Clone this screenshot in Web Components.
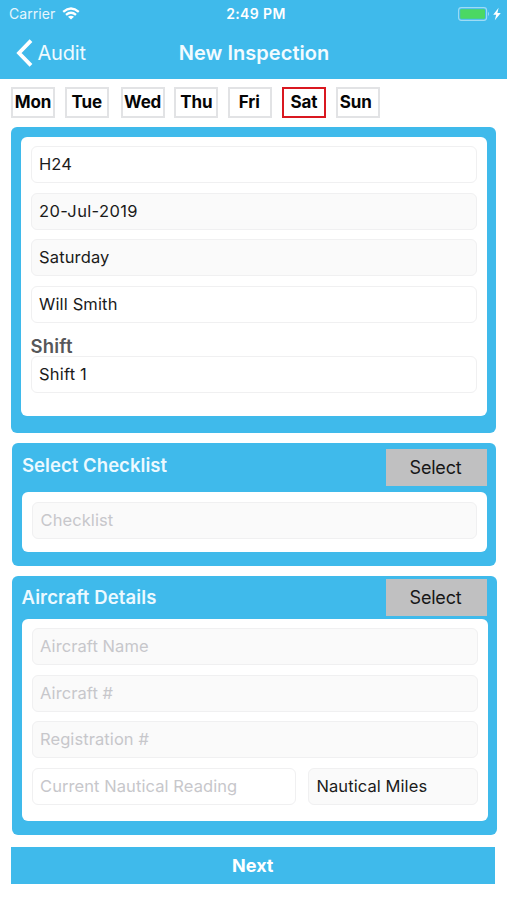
<!DOCTYPE html>
<html lang="en">
<head>
<meta charset="utf-8">
<title>New Inspection</title>
<style>
  body { margin: 0; width: 507px; height: 900px; background: #fff; color: #1b1b1b; overflow: hidden;
    font-family: Inter, "Liberation Sans", sans-serif; --blue: #3fbaeb; }
</style>
</head>
<body>
<inspection-app></inspection-app>
<script>
const define = (name, html, setup) => customElements.define(name, class extends HTMLElement {
  connectedCallback() {
    if (this.shadowRoot) return;
    const t = document.createElement('template');
    t.innerHTML = html;
    this.attachShadow({ mode: 'open' }).append(t.content.cloneNode(true));
    if (setup) setup(this);
  }
});

define('status-bar', `
<style>
  :host { display: grid; grid-template-columns: 1fr auto 1fr; align-items: center; height: 27px; padding: 0 5px 0 9px; color: #fff; }
  .left, .right { display: flex; align-items: center; }
  .left { gap: 6.5px; font-size: 14px; letter-spacing: .05px; color: #e6f6fd; }
  .time { font-size: 14px; font-weight: 600; letter-spacing: .4px; margin-left: 1px; }
  .right { justify-content: flex-end; }
  svg { display: block; }
</style>
<div class="left"><span>Carrier</span>
  <svg width="18" height="13" viewBox="0 0 18 13" fill="none" stroke="#fff" stroke-width="2.3">
    <path d="M1.2 4.9 Q9 -1.8 16.8 4.9"/><path d="M4 7.9 Q9 3.7 14 7.9"/><path d="M9 12.5 L6 9.7 Q9 7.6 12 9.7Z" fill="#fff" stroke="none"/>
  </svg></div>
<div class="time">2:49 PM</div>
<div class="right">
  <svg width="44" height="14" viewBox="0 0 44 14">
    <rect x=".6" y=".6" width="28" height="12.8" rx="2.8" fill="none" stroke="#9edcf5" stroke-width="1.1"/>
    <rect x="2.2" y="2.2" width="24.8" height="9.6" rx="1" fill="#4bd863"/>
    <path d="M30 4.8 Q32 7 30 9.2Z" fill="#9edcf5"/>
    <path d="M40.6 .8 L35.2 7.7 H38.2 L36.8 13.2 L42.8 6.1 H39.4Z" fill="#fff"/>
  </svg></div>`);

define('nav-bar', `
<style>
  :host { display: grid; grid-template-columns: 1fr auto 1fr; align-items: center; height: 51px; padding: 0 16px; color: #fff; }
  .back { display: flex; align-items: center; gap: 4.5px; font-size: 20px; letter-spacing: -.2px; color: #eefaff; }
  .title { font-size: 20px; font-weight: 600; letter-spacing: .05px; color: #f2fbff; margin-left: 1px; }
</style>
<div class="back"><svg width="17" height="28" viewBox="0 0 17 28" fill="none" stroke="#fff" stroke-width="3.8"><path d="M15 1.6 L3 14 L15 26.4"/></svg><slot name="back"></slot></div>
<div class="title"><slot></slot></div>`);

define('day-button', `
<style>
  :host { display: flex; align-items: center; justify-content: center; box-sizing: border-box; width: 44px; height: 31px; padding-bottom: 1.5px;
    border: 2px solid #e2e3e5; color: #050505; font-size: 17px; font-weight: 700; white-space: nowrap; letter-spacing: -.15px; }
  :host([selected]) { border-color: #d91820; }
</style><slot></slot>`);

define('form-card', `
<style>
  :host { display: block; box-sizing: border-box; background: var(--blue); border-radius: 6px; }
  header { display: flex; justify-content: space-between; align-items: flex-start; font-size: 18.5px; font-weight: 600; line-height: 22px; color: #ecf9ff; }
  section { box-sizing: border-box; background: #fff; border-radius: 6px; display: flex; flex-direction: column; gap: 9.5px; padding: 9.5px 10px; }
  h2 { margin: 0; font: inherit; padding-top: var(--title-top, 0); letter-spacing: var(--title-ls, 0); }
</style>
<header><h2></h2><slot name="action"></slot></header>
<section><slot></slot></section>`, el => {
  const header = el.shadowRoot.querySelector('header');
  if (el.hasAttribute('heading')) header.querySelector('h2').textContent = el.getAttribute('heading');
  else header.remove();
  const s = el.shadowRoot.querySelector('section');
  s.style.height = el.getAttribute('body') + 'px';
});

define('select-button', `
<style>
  :host { display: flex; align-items: center; justify-content: center; box-sizing: border-box; width: 101px; height: 37px; background: #c0c0c1;
    color: #171717; font-size: 18px; font-weight: 400; letter-spacing: -.2px; padding-right: 1px; }
</style><slot></slot>`);

define('form-field', `
<style>
  :host { display: flex; align-items: center; box-sizing: border-box; height: 37px; flex: none; border: 1px solid #f0f0f1; border-radius: 6px;
    background: #fff; padding: 0 7.5px 1px; font-size: 16.5px; white-space: nowrap; color: #1b1b1b; letter-spacing: .08px; }
  :host([readonly]) { background: #fafafa; }
  :host([empty]) { color: #c7c7cb; }
</style><slot></slot>`);

define('next-button', `
<style>
  :host { display: flex; align-items: center; justify-content: center; height: 36.5px; background: var(--blue); color: #fff; font-size: 18px; font-weight: 700; }
</style><slot></slot>`);

define('inspection-app', `
<style>
  :host { display: flex; flex-direction: column; height: 900px; }
  .top { background: var(--blue); height: 79px; flex: none; }
  .days { display: flex; padding: 8px 0 0 11px; height: 48px; box-sizing: border-box; gap: 9.8px; }
  .c1 { width: 485px; height: 306px; margin-left: 11px; padding: 9.5px 9.5px 0 9.5px; }
  .c2 { width: 484px; height: 123.4px; margin: 10px 0 0 12px; padding: 6px 9.5px 0 10px; --title-top: 5px; --title-ls: .05px; }
  .c3 { width: 485px; height: 259px; margin: 9.6px 0 0 12px; padding: 2.5px 9px 0 9.5px; --title-top: 8px; --title-ls: .13px; }
  .c2 select-button { margin-bottom: 6px; }
  .c3 select-button { margin: .2px 1.5px 3.3px 0; padding-top: 1px; }
  h3 { margin: 2.5px 0 -9.5px; height: 21.5px; font-size: 18.5px; line-height: 22px; font-weight: 600; color: #56575a; letter-spacing: .2px; }
  .row { display: grid; grid-template-columns: 264.5px 1fr; gap: 12px; }
  next-button { margin: 12.5px 12.5px 0 11px; }
</style>
<div class="top"><status-bar></status-bar><nav-bar><span slot="back">Audit</span>New Inspection</nav-bar></div>
<div class="days">
  <day-button>Mon</day-button><day-button>Tue</day-button><day-button style="margin-left:2px">Wed</day-button><day-button>Thu</day-button>
  <day-button style="padding-right:2px">Fri</day-button><day-button selected>Sat</day-button><day-button style="padding-right:4px">Sun</day-button>
</div>
<form-card class="c1" body="279.5">
  <form-field>H24</form-field><form-field readonly style="letter-spacing:.35px">20-Jul-2019</form-field><form-field readonly style="letter-spacing:.15px">Saturday</form-field><form-field style="letter-spacing:.15px">Will Smith</form-field>
  <h3>Shift</h3><form-field style="letter-spacing:.2px">Shift 1</form-field>
</form-card>
<form-card class="c2" heading="Select Checklist" body="60">
  <select-button slot="action">Select</select-button><form-field readonly empty>Checklist</form-field>
</form-card>
<form-card class="c3" heading="Aircraft Details" body="202">
  <select-button slot="action">Select</select-button>
  <form-field readonly empty>Aircraft Name</form-field><form-field readonly empty>Aircraft #</form-field><form-field readonly empty>Registration #</form-field>
  <div class="row"><form-field empty>Current Nautical Reading</form-field><form-field readonly>Nautical Miles</form-field></div>
</form-card>
<next-button>Next</next-button>`);
</script>
</body>
</html>
